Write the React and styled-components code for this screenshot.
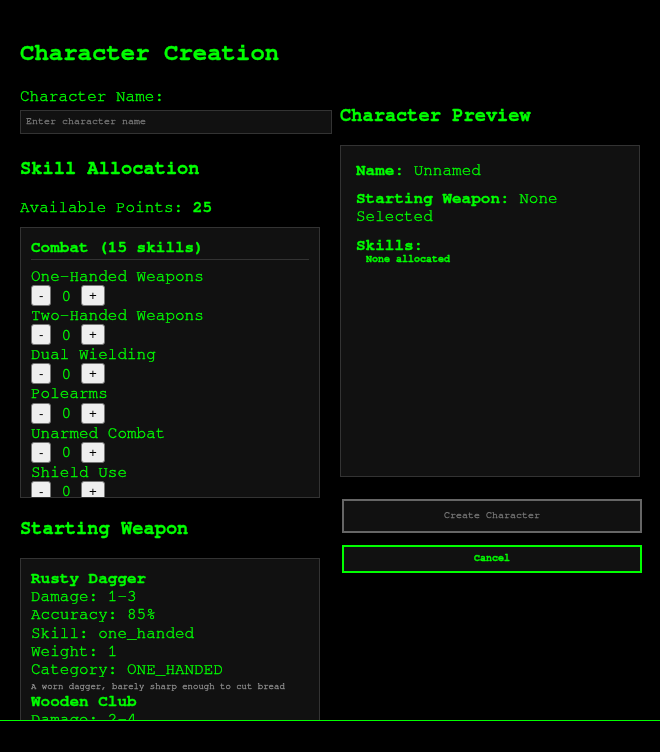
import React, { useState } from 'react'
import styled, { createGlobalStyle } from 'styled-components'

const GlobalStyle = createGlobalStyle`
  body {
    margin: 0;
    background: #000;
    color: #0f0;
    font-family: "Nimbus Mono PS", "Nimbus Mono L", FreeMono, Courier, "Liberation Mono", monospace;
    line-height: 1.133;
    -webkit-text-stroke: 0.35px currentColor;
  }
`

const Shell = styled.div`
  height: 100vh;
  display: flex;
  flex-direction: column;
  background: #000;
`

const Main = styled.main`
  flex: 1;
  min-height: 0;
  overflow: hidden;
  display: flex;
  align-items: flex-start;
  gap: 20px;
  padding: 20px;
`

const StatusBar = styled.footer`
  height: 31px;
  flex-shrink: 0;
  border-top: 1px solid #0f0;
  background: #000;
`

const Column = styled.div`
  width: 300px;
  flex-shrink: 0;
  padding-top: ${(p) => p.$offset || 0}px;
`

const Title = styled.h2`
  font-size: 24px;
  margin: 20px 0;
`

const Label = styled.label`
  display: block;
  font-size: 16px;
  margin-bottom: 5px;
`

const Field = styled.div`
  margin-bottom: 24px;
`

const NameInput = styled.input`
  width: 100%;
  padding: 5px;
  font-family: inherit;
  font-size: 10px;
  line-height: inherit;
  background: #111;
  color: #0f0;
  border: 1px solid #333;
  outline: none;
  &::placeholder {
    color: #777;
  }
`

const SectionTitle = styled.h3`
  font-size: 18.72px;
  margin: 20px 0 19px;
`

const Points = styled.p`
  font-size: 16px;
  margin: 0 0 11px;
`

const Panel = styled.div`
  background: #111;
  border: 1px solid #333;
  padding: ${(p) => p.$pad || 10}px;
  height: ${(p) => (p.$height ? `${p.$height}px` : 'auto')};
  min-height: ${(p) => (p.$minHeight ? `${p.$minHeight}px` : '0')};
  overflow-y: ${(p) => (p.$height ? 'auto' : 'visible')};
  scrollbar-width: none;
`

const CategoryTitle = styled.h4`
  font-size: 16px;
  margin: 0 0 7px;
  padding-bottom: 3px;
  border-bottom: 1px solid #333;
`

const SkillName = styled.div`
  font-size: 16px;
`

const Controls = styled.div`
  display: flex;
  align-items: center;
`

const StepButton = styled.button`
  font-family: "Liberation Sans", Arial, sans-serif;
  font-size: 13.33px;
  line-height: normal;
  padding: 2px 7px;
  background: #efefef;
  color: #000;
  border: 1px solid #767676;
  border-radius: 3px;
  -webkit-text-stroke: 0;
  cursor: pointer;
`

const Count = styled.span`
  margin: 0 10px;
  font-size: 16px;
`

const WeaponName = styled.div`
  font-size: 16px;
  font-weight: bold;
`

const Stat = styled.div`
  font-size: 16px;
`

const Description = styled.div`
  font-size: 9px;
  color: #888;
  margin-top: 4px;
`

const PreviewLine = styled.p`
  font-size: 16px;
  margin: 0 0 10px;
`

const SkillsHeading = styled.div`
  font-size: 16px;
  font-weight: bold;
`

const EmptyNote = styled.div`
  font-size: 10px;
  font-weight: bold;
  margin-left: 10px;
`

const ActionButton = styled.button`
  display: block;
  width: 300px;
  margin: ${(p) => (p.$primary ? '22px' : '12px')} 0 0 2px;
  padding: ${(p) => (p.$primary ? '9px' : '6.5px')} 0;
  font-family: inherit;
  font-size: 10px;
  line-height: inherit;
  font-weight: ${(p) => (p.$primary ? 'normal' : 'bold')};
  background: #111;
  color: ${(p) => (p.$primary ? '#777' : '#0f0')};
  border: 2px solid ${(p) => (p.$primary ? '#666' : '#0f0')};
  cursor: ${(p) => (p.disabled ? 'default' : 'pointer')};
`

const skills = [
  'One-Handed Weapons',
  'Two-Handed Weapons',
  'Dual Wielding',
  'Polearms',
  'Unarmed Combat',
  'Shield Use',
  'Archery',
  'Crossbows',
  'Throwing',
  'Parrying',
  'Dodging',
  'Armor Use',
  'Tactics',
  'Critical Strikes',
  'Mounted Combat',
]

const weapons = [
  { name: 'Rusty Dagger', damage: '1-3', accuracy: 85, skill: 'one_handed', weight: 1, category: 'ONE_HANDED', desc: 'A worn dagger, barely sharp enough to cut bread' },
  { name: 'Wooden Club', damage: '2-4', accuracy: 80, skill: 'one_handed', weight: 3, category: 'ONE_HANDED', desc: 'A heavy stick with a knot at the end' },
  { name: 'Short Bow', damage: '1-4', accuracy: 75, skill: 'archery', weight: 2, category: 'RANGED', desc: 'A simple bow of bent yew' },
]

const App = () => {
  const [name, setName] = useState('')
  const [alloc, setAlloc] = useState({})
  const spent = Object.values(alloc).reduce((a, b) => a + b, 0)

  const change = (skill, delta) => {
    const cur = alloc[skill] || 0
    const next = cur + delta
    if (next < 0 || spent + delta > 25) return
    setAlloc({ ...alloc, [skill]: next })
  }

  return (
    <Shell>
      <GlobalStyle />
      <Main>
        <Column>
          <Title>Character Creation</Title>
          <Label>Character Name:</Label>
          <Field>
            <NameInput
              placeholder="Enter character name"
              value={name}
              onChange={(e) => setName(e.target.value)}
            />
          </Field>

          <SectionTitle>Skill Allocation</SectionTitle>
          <Points>
            Available Points: <b>{25 - spent}</b>
          </Points>
          <Panel $height={249}>
            <CategoryTitle>Combat (15 skills)</CategoryTitle>
            {skills.map((s) => (
              <div key={s}>
                <SkillName>{s}</SkillName>
                <Controls>
                  <StepButton onClick={() => change(s, -1)}>-</StepButton>
                  <Count>{alloc[s] || 0}</Count>
                  <StepButton onClick={() => change(s, 1)}>+</StepButton>
                </Controls>
              </div>
            ))}
          </Panel>

          <SectionTitle>Starting Weapon</SectionTitle>
          <Panel>
            {weapons.map((w) => (
              <div key={w.name}>
                <WeaponName>{w.name}</WeaponName>
                <Stat>Damage: {w.damage}</Stat>
                <Stat>Accuracy: {w.accuracy}%</Stat>
                <Stat>Skill: {w.skill}</Stat>
                <Stat>Weight: {w.weight}</Stat>
                <Stat>Category: {w.category}</Stat>
                <Description>{w.desc}</Description>
              </div>
            ))}
          </Panel>
        </Column>

        <Column $offset={65}>
          <SectionTitle>Character Preview</SectionTitle>
          <Panel $pad={15} $minHeight={300}>
            <PreviewLine>
              <b>Name:</b> {name || 'Unnamed'}
            </PreviewLine>
            <PreviewLine>
              <b>Starting Weapon:</b> None Selected
            </PreviewLine>
            <SkillsHeading>Skills:</SkillsHeading>
            <EmptyNote>None allocated</EmptyNote>
          </Panel>
          <ActionButton $primary disabled>Create Character</ActionButton>
          <ActionButton>Cancel</ActionButton>
        </Column>
      </Main>
      <StatusBar />
    </Shell>
  )
}

export default App
